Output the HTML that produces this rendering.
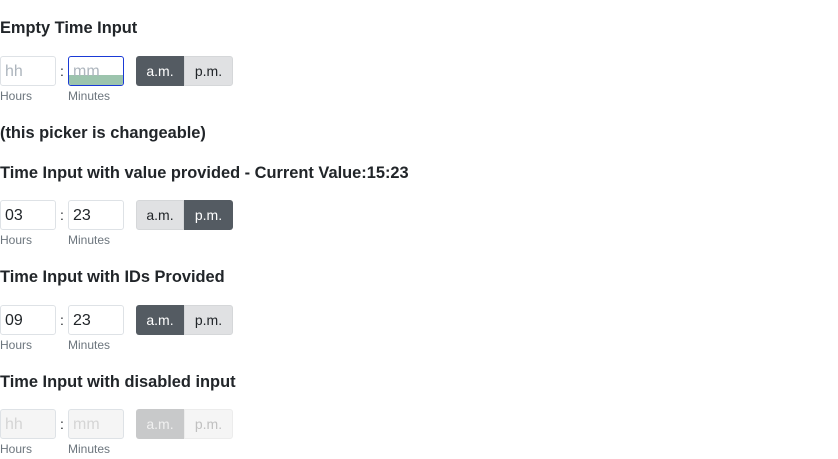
<!DOCTYPE html>
<html><head><style>
body{margin:0;width:838px;height:458px;overflow:hidden;background:#fff;font-family:"Liberation Sans",sans-serif;color:#212529;position:relative}
.h{position:absolute;left:0;font-size:16.4px;font-weight:bold;line-height:20px;margin:0}
.row{position:absolute;left:0;width:300px;height:50px}
.in{position:absolute;top:0;width:56px;height:30px;box-sizing:border-box;border:1px solid #dee2e6;border-radius:3px;font-size:16px;line-height:30px;padding-left:4px;color:#212529;overflow:hidden}
.ph{color:#adb5bd}
.col{position:absolute;left:60px;top:7px;font-size:14px}
.lb{position:absolute;top:33px;font-size:12px;color:#6c757d}
.b{position:absolute;top:0;height:30px;box-sizing:border-box;font-size:14px;line-height:30px;text-align:center}
.on{background:#545b62;color:#fff}
.off{background:#e0e1e3;color:#212529;border:1px solid #d5d7d9;line-height:28px}
</style></head><body>
<div class="h" style="top:18px">Empty Time Input</div>
<div class="row" style="top:56px">
<div class="in ph" style="left:0">hh</div><span class="col">:</span>
<div class="in ph" style="left:68px;border:1px solid #1a3ad6;"><span style="position:absolute;left:0;right:0;bottom:0;height:10px;background:#9cc4ad"></span><span style="position:relative">mm</span></div>
<div class="b on" style="left:136px;width:48px;border-radius:3px 0 0 3px">a.m.</div>
<div class="b off" style="left:184px;width:49px;border-radius:0 3px 3px 0">p.m.</div>
<span class="lb" style="left:0">Hours</span><span class="lb" style="left:68px">Minutes</span>
</div>
<div class="h" style="top:123px">(this picker is changeable)</div>
<div class="h" style="top:163px">Time Input with value provided - Current Value:15:23</div>
<div class="row" style="top:200px">
<div class="in" style="left:0">03</div><span class="col">:</span>
<div class="in" style="left:68px">23</div>
<div class="b off" style="left:136px;width:48px;border-radius:3px 0 0 3px">a.m.</div>
<div class="b on" style="left:184px;width:49px;border-radius:0 3px 3px 0">p.m.</div>
<span class="lb" style="left:0">Hours</span><span class="lb" style="left:68px">Minutes</span>
</div>
<div class="h" style="top:267px">Time Input with IDs Provided</div>
<div class="row" style="top:305px">
<div class="in" style="left:0">09</div><span class="col">:</span>
<div class="in" style="left:68px">23</div>
<div class="b on" style="left:136px;width:48px;border-radius:3px 0 0 3px">a.m.</div>
<div class="b off" style="left:184px;width:49px;border-radius:0 3px 3px 0">p.m.</div>
<span class="lb" style="left:0">Hours</span><span class="lb" style="left:68px">Minutes</span>
</div>
<div class="h" style="top:372px">Time Input with disabled input</div>
<div class="row" style="top:409px">
<div class="in" style="left:0;background:#f5f5f5;color:#d5d5d5">hh</div><span class="col">:</span>
<div class="in" style="left:68px;background:#f5f5f5;color:#d5d5d5">mm</div>
<div class="b" style="left:136px;width:48px;border-radius:3px 0 0 3px;background:#c8c9ca;color:#f0f0f0">a.m.</div>
<div class="b" style="left:184px;width:49px;border-radius:0 3px 3px 0;background:#f5f5f5;color:#c0c0c0;border:1px solid #ececec;line-height:28px">p.m.</div>
<span class="lb" style="left:0">Hours</span><span class="lb" style="left:68px">Minutes</span>
</div>
</body></html>
